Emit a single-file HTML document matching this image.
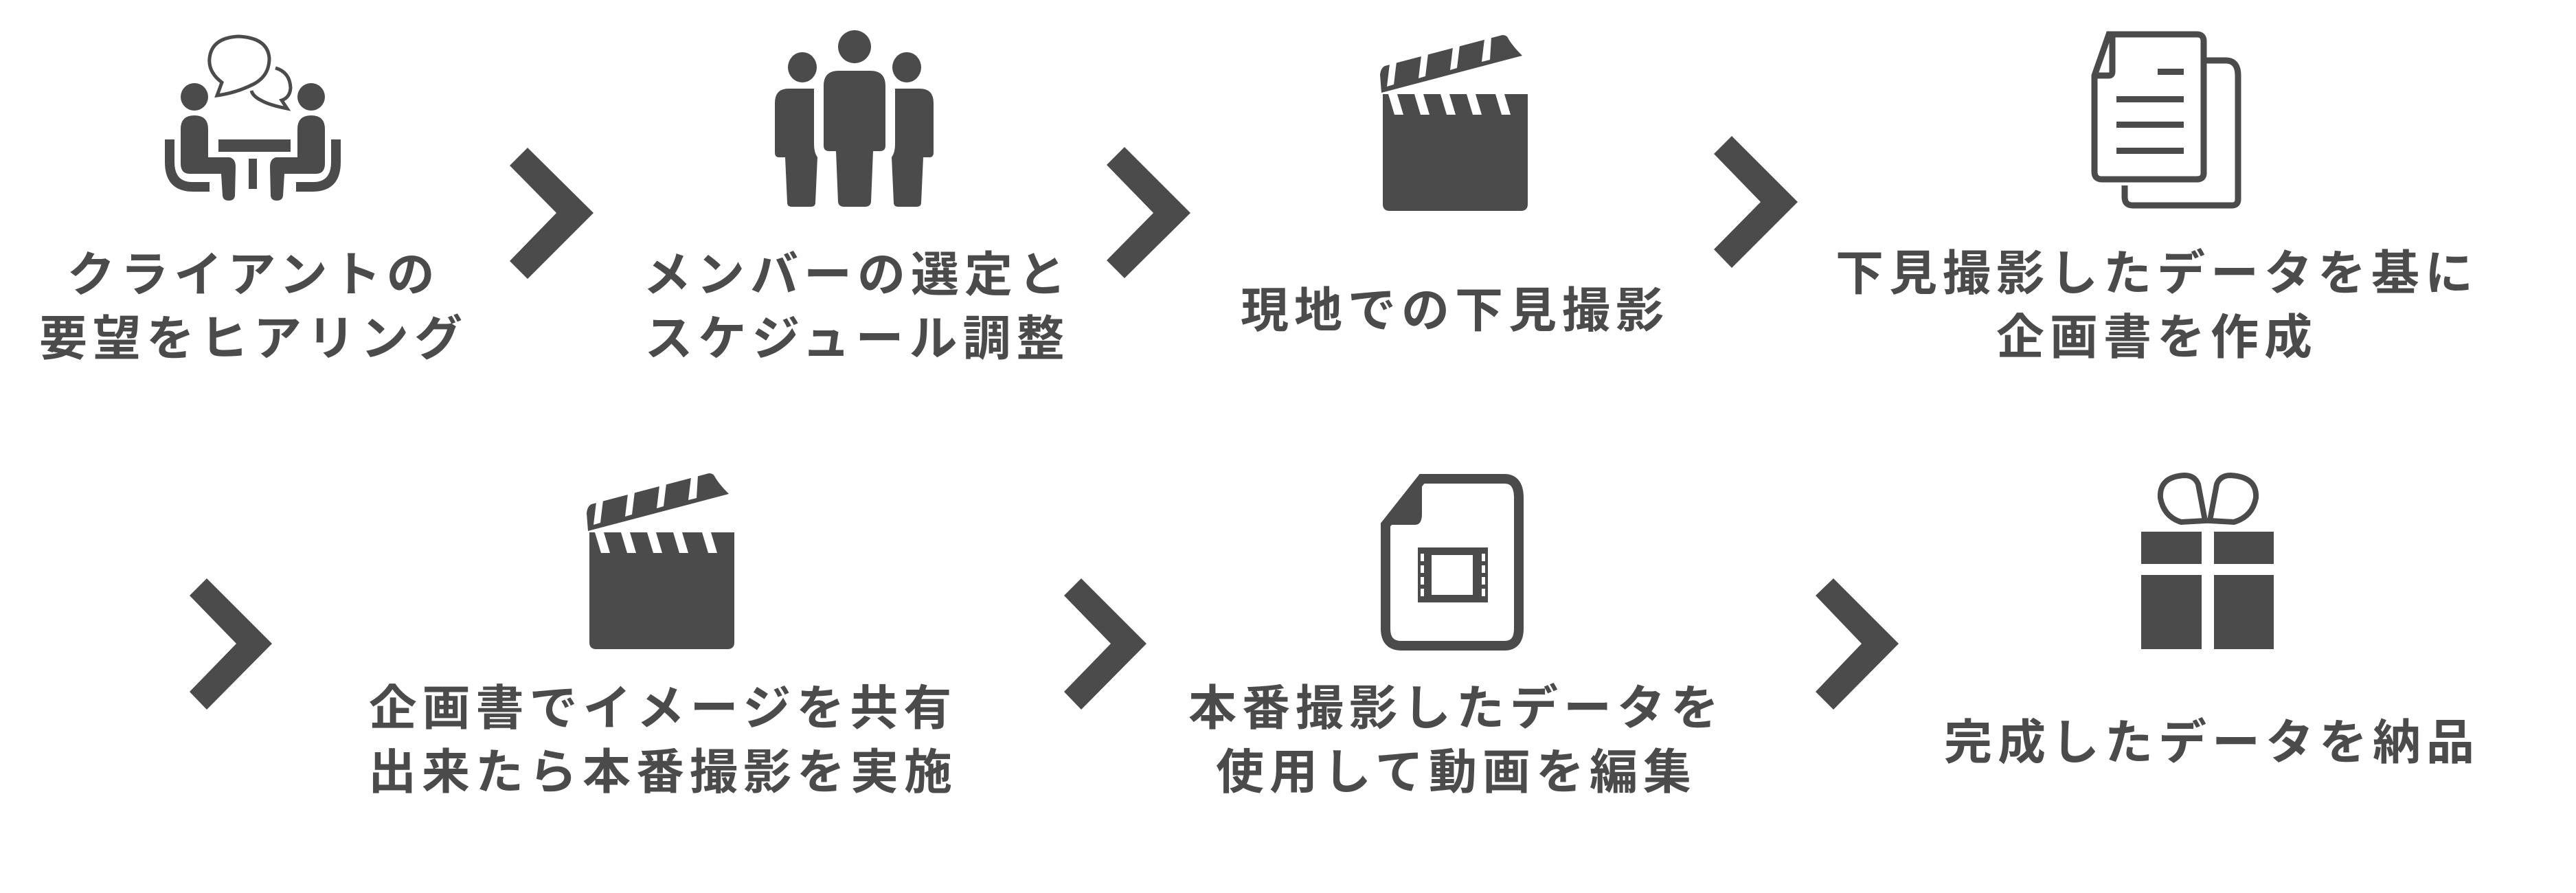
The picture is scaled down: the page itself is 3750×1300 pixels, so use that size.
<!DOCTYPE html>
<html><head><meta charset="utf-8"><style>
html,body{margin:0;padding:0;background:#fff;}
body{width:3750px;height:1300px;position:relative;overflow:hidden;}
svg{position:absolute;left:0;top:0;}
.t{position:absolute;transform:translateX(-50%);white-space:nowrap;text-align:center;
font-family:"Liberation Sans","Noto Sans CJK JP",sans-serif;font-weight:700;font-size:70px;
line-height:93px;letter-spacing:8px;color:#4b4b4b;}
</style></head><body>
<svg width="3750" height="1300" viewBox="0 0 3750 1300">
<g fill="#4b4b4b">
<polygon points="742,241 768,215 864,310 768,406 742,380 810,310"/>
<polygon points="1611,240 1637,214 1733,310 1637,405 1611,379 1679,310"/>
<polygon points="2495,224 2521,198 2617,294 2521,390 2495,363 2563,294"/>
<polygon points="276,867 301,842 396,937 301,1033 276,1007 344,937"/>
<polygon points="1549,867 1574,842 1669,937 1574,1033 1549,1007 1617,937"/>
<polygon points="2643,867 2669,842 2764,937 2669,1033 2643,1007 2710,937"/>

<ellipse cx="283" cy="141" rx="20" ry="20"/>
<ellipse cx="453" cy="141" rx="20" ry="20"/>
<path d="M263,188 Q263,168 283,168 Q303,168 303,188 L303,229 L334,229 Q343,231 343,243 L342,285 Q341,292 333,292 Q325,292 324,285 L322,253 L276,253 Q263,253 263,238 Z"/>
<path d="M473,188 Q473,168 453,168 Q433,168 433,188 L433,229 L402,229 Q393,231 393,243 L394,285 Q395,292 403,292 Q411,292 412,285 L414,253 L460,253 Q473,253 473,238 Z"/>
<path d="M240,203 L254,203 L254,236 Q254,265 280,265 L305,265 L305,279 L282,279 Q240,279 240,236 Z"/>
<path d="M496,203 L482,203 L482,236 Q482,265 456,265 L431,265 L431,279 L454,279 Q496,279 496,236 Z"/>
<rect x="318" y="203" width="105" height="18"/>
<rect x="362" y="231" width="12" height="44"/>
<g fill="none" stroke="#4b4b4b" stroke-width="5">
<path d="M323,120 Q303,105 305,85 Q308,55 347,53 Q390,55 392,85 Q392,110 370,122 Q345,135 316,139 Z"/>
<path d="M401,99 Q422,105 423,128 Q422,142 410,146 L418,158 Q392,153 380,146 Q368,140 366,132"/>
</g>

<ellipse cx="1244" cy="68" rx="24" ry="24"/>
<path d="M1199,125 Q1199,103 1221,103 L1267,103 Q1289,103 1289,125 L1289,212 Q1289,220 1281,220 L1271,220 L1268,294 Q1267,301 1259,301 L1229,301 Q1221,301 1220,294 L1217,220 L1207,220 Q1199,220 1199,212 Z"/>
<ellipse cx="1168" cy="98" rx="21" ry="22"/>
<path d="M1128,150 Q1128,129 1148,129 L1185,129 L1185,210 Q1185,222 1190,229 L1187,295 Q1187,301 1180,301 L1153,301 Q1146,301 1146,295 L1143,229 L1134,229 Q1128,229 1128,222 Z"/>
<ellipse cx="1320" cy="98" rx="21" ry="22"/>
<path d="M1359,150 Q1359,129 1339,129 L1303,129 L1303,210 Q1303,222 1298,229 L1301,295 Q1301,301 1308,301 L1334,301 Q1341,301 1341,295 L1344,229 L1353,229 Q1359,229 1359,222 Z"/>
</g>

<g transform="translate(2011,51)">
<g fill="#4b4b4b">
<path d="M2,86 L213,86 L213,246 Q213,256 203,256 L12,256 Q2,256 2,246 Z"/>
<path d="M0,84 L-2,58 Q-1,48 5,45 L176,0 Q182,0 184,4 Q190,15 205,30 Z"/>
</g>
<g fill="#fff">
<polygon points="10,86 23,86 32,116 19,116"/>
<polygon points="48,86 61,86 70,116 57,116"/>
<polygon points="86,86 99,86 108,116 95,116"/>
<polygon points="124,86 137,86 146,116 133,116"/>
<polygon points="166,86 179,86 188,116 175,116"/>
<polygon points="12,42 22,39 18,72 8,75"/>
<polygon points="58,30 68,27 64,60 54,63"/>
<polygon points="104,18 114,15 110,48 100,51"/>
<polygon points="150,6 160,3 158,36 146,39"/>
</g>
</g>
<g transform="translate(856,689)">
<g fill="#4b4b4b">
<path d="M2,86 L213,86 L213,246 Q213,256 203,256 L12,256 Q2,256 2,246 Z"/>
<path d="M0,84 L-2,58 Q-1,48 5,45 L176,0 Q182,0 184,4 Q190,15 205,30 Z"/>
</g>
<g fill="#fff">
<polygon points="10,86 23,86 32,116 19,116"/>
<polygon points="48,86 61,86 70,116 57,116"/>
<polygon points="86,86 99,86 108,116 95,116"/>
<polygon points="124,86 137,86 146,116 133,116"/>
<polygon points="166,86 179,86 188,116 175,116"/>
<polygon points="12,42 22,39 18,72 8,75"/>
<polygon points="58,30 68,27 64,60 54,63"/>
<polygon points="104,18 114,15 110,48 100,51"/>
<polygon points="150,6 160,3 158,36 146,39"/>
</g>
</g>

<g fill="none" stroke="#4b4b4b" stroke-width="9">
<path d="M3212,88 L3240,88 Q3258,88 3258,110 L3258,290 Q3258,299 3249,299 L3105,299 Q3093,299 3093,287 L3093,270"/>
<path d="M3070,50 L3198,50 Q3208,50 3208,60 L3208,252 Q3208,261 3198,261 L3060,261 Q3049,261 3049,250 L3049,110 Z"/>
<path d="M3049,110 L3070,110 Q3075,110 3075,104 L3075,50"/>
</g>
<g fill="#4b4b4b">
<rect x="3141" y="100" width="38" height="9"/>
<rect x="3081" y="140" width="98" height="9"/>
<rect x="3081" y="177" width="98" height="9"/>
<rect x="3081" y="215" width="98" height="9"/>
</g>

<path d="M2070,697 L2190,697 Q2211,697 2211,725 L2211,915 Q2211,940 2190,940 L2040,940 Q2017,940 2017,915 L2017,764 Z" fill="none" stroke="#4b4b4b" stroke-width="14"/>
<path d="M2017,764 L2060,764 Q2070,764 2070,748 L2070,697 Z" fill="#4b4b4b"/>
<rect x="2064" y="797" width="102" height="80" fill="#4b4b4b"/>
<g fill="#fff">
<rect x="2084" y="808" width="60" height="58"/>
<rect x="2068" y="806" width="5" height="11"/><rect x="2068" y="823" width="5" height="11"/><rect x="2068" y="840" width="5" height="11"/><rect x="2068" y="857" width="5" height="11"/>
<rect x="2157" y="806" width="5" height="11"/><rect x="2157" y="823" width="5" height="11"/><rect x="2157" y="840" width="5" height="11"/><rect x="2157" y="857" width="5" height="11"/>
</g>

<g fill="#4b4b4b">
<rect x="3117" y="774" width="88" height="47"/>
<rect x="3223" y="774" width="87" height="47"/>
<rect x="3117" y="837" width="88" height="108"/>
<rect x="3223" y="837" width="87" height="108"/>
</g>
<g fill="none" stroke="#4b4b4b" stroke-width="8">
<path d="M3210,758 L3200,705 Q3195,692 3180,692 Q3143,694 3145,725 Q3150,752 3175,760 Z"/>
<path d="M3217,758 L3227,705 Q3232,692 3247,692 Q3286,694 3284,725 Q3279,752 3252,760 Z"/>
</g>
</svg>

<div class="t" style="left:369px;top:354px;">クライアントの<br>要望をヒアリング</div>
<div class="t" style="left:1248px;top:354px;">メンバーの選定と<br>スケジュール調整</div>
<div class="t" style="left:2118px;top:406px;">現地での下見撮影</div>
<div class="t" style="left:3140px;top:352px;">下見撮影したデータを基に<br>企画書を作成</div>
<div class="t" style="left:965px;top:985px;">企画書でイメージを共有<br>出来たら本番撮影を実施</div>
<div class="t" style="left:2120px;top:985px;">本番撮影したデータを<br>使用して動画を編集</div>
<div class="t" style="left:3220px;top:1035px;">完成したデータを納品</div>
</body></html>
